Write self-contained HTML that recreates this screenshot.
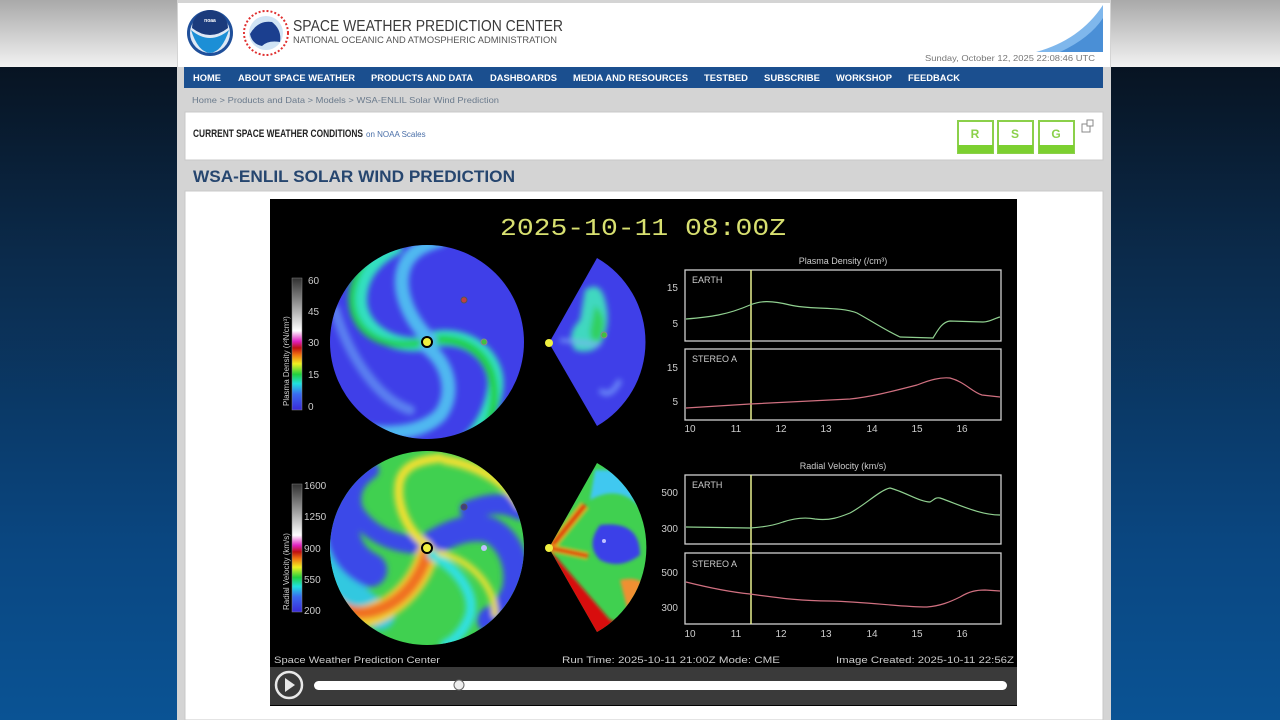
<!DOCTYPE html>
<html><head><meta charset="utf-8"><style>
html,body{margin:0;padding:0;width:1280px;height:720px;overflow:hidden;background:#000}
svg{display:block}
text{font-family:"Liberation Sans",sans-serif}
</style></head><body>
<svg width="1280" height="720" viewBox="0 0 1280 720" xmlns="http://www.w3.org/2000/svg">
<defs>
<linearGradient id="bg" x1="0" y1="0" x2="0" y2="1">
<stop offset="0" stop-color="#060c14"/><stop offset="0.35" stop-color="#0b2a4a"/><stop offset="0.75" stop-color="#0a4680"/><stop offset="1" stop-color="#0a5394"/></linearGradient>
<linearGradient id="topband" x1="0" y1="0" x2="0" y2="1"><stop offset="0" stop-color="#a9a9a9"/><stop offset="1" stop-color="#f2f2f2"/></linearGradient>
<linearGradient id="cbd" x1="0" y1="1" x2="0" y2="0">
<stop offset="0" stop-color="#3a2ad8"/><stop offset="0.12" stop-color="#3a6cf0"/><stop offset="0.2" stop-color="#20e0e0"/><stop offset="0.27" stop-color="#20d040"/><stop offset="0.35" stop-color="#f0f020"/><stop offset="0.42" stop-color="#f07010"/><stop offset="0.47" stop-color="#c01010"/><stop offset="0.52" stop-color="#e020c0"/><stop offset="0.6" stop-color="#ffffff"/><stop offset="1" stop-color="#303030"/></linearGradient>
<filter id="bl" x="-20%" y="-20%" width="140%" height="140%"><feGaussianBlur stdDeviation="3"/></filter>
<filter id="bl2"><feGaussianBlur stdDeviation="1.5"/></filter>
<clipPath id="c1"><circle cx="427" cy="342" r="97"/></clipPath>
<clipPath id="c2"><circle cx="427" cy="548" r="97"/></clipPath>
<clipPath id="w1"><path d="M549 343 L597 258 A97 97 0 0 1 597 426 Z"/></clipPath>
<clipPath id="w2"><path d="M549 548 L597 463 A97 97 0 0 1 597 632 Z"/></clipPath>
</defs>
<rect width="1280" height="720" fill="url(#bg)"/>
<rect width="1280" height="67" fill="url(#topband)"/>
<rect x="177" y="0" width="934" height="720" fill="#d4d4d4"/>
<rect x="178" y="3" width="932" height="64" fill="#fff"/>
<path d="M1036 52 Q1080 40 1103 5 L1103 52 Z" fill="#7fb7ec"/>
<path d="M1060 52 Q1090 38 1103 18 L1103 52 Z" fill="#4a8fd6"/>
<circle cx="210" cy="33" r="23" fill="#1f4f9a"/><circle cx="210" cy="33" r="20" fill="#dfe9f5"/>
<path d="M191 30 Q210 46 229 30 Q222 52 210 53 Q198 52 191 30Z" fill="#1c8fd6"/>
<path d="M192 28 A18 18 0 0 1 228 28 Q210 42 192 28Z" fill="#1b3b7c"/>
<text x="210" y="22" font-size="5" fill="#fff" text-anchor="middle" font-weight="bold">noaa</text>
<circle cx="266" cy="33" r="22" fill="#fff" stroke="#e03030" stroke-width="2" stroke-dasharray="2 2"/>
<circle cx="266" cy="33" r="17" fill="#d0e4f5"/>
<path d="M250 34 Q258 20 272 22 Q282 30 280 42 Q268 40 262 46 Q252 44 250 34Z" fill="#1b3f8f"/>
<text x="293" y="31" font-size="15.5" fill="#3a3a3a" textLength="270" lengthAdjust="spacingAndGlyphs">SPACE WEATHER PREDICTION CENTER</text>
<text x="293" y="43" font-size="9" fill="#555" textLength="264" lengthAdjust="spacingAndGlyphs">NATIONAL OCEANIC AND ATMOSPHERIC ADMINISTRATION</text>
<text x="1095" y="61" font-size="8.5" fill="#777" text-anchor="end" textLength="170" lengthAdjust="spacingAndGlyphs">Sunday, October 12, 2025 22:08:46 UTC</text>
<rect x="184" y="67" width="919" height="21" fill="#1b4f8f"/>
<g font-size="9" font-weight="bold" fill="#fff">
<text x="193" y="81" textLength="28" lengthAdjust="spacingAndGlyphs">HOME</text>
<text x="238" y="81" textLength="117" lengthAdjust="spacingAndGlyphs">ABOUT SPACE WEATHER</text>
<text x="371" y="81" textLength="102" lengthAdjust="spacingAndGlyphs">PRODUCTS AND DATA</text>
<text x="490" y="81" textLength="67" lengthAdjust="spacingAndGlyphs">DASHBOARDS</text>
<text x="573" y="81" textLength="115" lengthAdjust="spacingAndGlyphs">MEDIA AND RESOURCES</text>
<text x="704" y="81" textLength="44" lengthAdjust="spacingAndGlyphs">TESTBED</text>
<text x="764" y="81" textLength="56" lengthAdjust="spacingAndGlyphs">SUBSCRIBE</text>
<text x="836" y="81" textLength="56" lengthAdjust="spacingAndGlyphs">WORKSHOP</text>
<text x="908" y="81" textLength="52" lengthAdjust="spacingAndGlyphs">FEEDBACK</text>
</g>
<text x="192" y="103" font-size="8.5" fill="#6a7a8c" textLength="307" lengthAdjust="spacingAndGlyphs">Home &gt; Products and Data &gt; Models &gt; WSA-ENLIL Solar Wind Prediction</text>
<rect x="185" y="112" width="918" height="48" fill="#fff" stroke="#c8c8c8"/>
<text x="193" y="137" font-size="11" font-weight="bold" fill="#222" textLength="170" lengthAdjust="spacingAndGlyphs">CURRENT SPACE WEATHER CONDITIONS</text>
<text x="366" y="137" font-size="8" fill="#4a6fa8">on NOAA Scales</text>
<g font-size="12" fill="#8bd04a" text-anchor="middle" font-weight="bold">
<rect x="958" y="121" width="35" height="32" fill="#fff" stroke="#8bd04a" stroke-width="2"/><rect x="958" y="145" width="35" height="8" fill="#7cd030"/><text x="975" y="138">R</text>
<rect x="998" y="121" width="35" height="32" fill="#fff" stroke="#8bd04a" stroke-width="2"/><rect x="998" y="145" width="35" height="8" fill="#7cd030"/><text x="1015" y="138">S</text>
<rect x="1039" y="121" width="35" height="32" fill="#fff" stroke="#8bd04a" stroke-width="2"/><rect x="1039" y="145" width="35" height="8" fill="#7cd030"/><text x="1056" y="138">G</text>
</g>
<rect x="1082" y="124" width="8" height="8" fill="none" stroke="#888"/><rect x="1087" y="120" width="6" height="6" fill="#fff" stroke="#888"/>
<text x="193" y="182" font-size="17" font-weight="bold" fill="#26466f" textLength="322" lengthAdjust="spacingAndGlyphs">WSA-ENLIL SOLAR WIND PREDICTION</text>
<rect x="185" y="191" width="918" height="529" fill="#fff" stroke="#c8c8c8"/>
<rect x="270" y="199" width="747" height="507" fill="#000"/>
<text x="643" y="235" font-size="24" fill="#d8e070" text-anchor="middle" style="font-family:'Liberation Mono',monospace" textLength="286" lengthAdjust="spacingAndGlyphs">2025-10-11 08:00Z</text>

<g clip-path="url(#c1)">
<rect x="320" y="240" width="220" height="210" fill="#3f3fe8"/>
<g filter="url(#bl)" fill="none" stroke-linecap="round">
<path d="M427 343 C395 350 360 330 360 300 C360 280 370 262 395 248" stroke="#30e0c0" stroke-width="14"/>
<path d="M420 343 C380 350 350 330 352 295 C354 275 365 255 380 245" stroke="#20d050" stroke-width="7"/>
<path d="M430 340 C470 330 500 360 495 390 C490 420 475 440 450 455" stroke="#30e0c0" stroke-width="16"/>
<path d="M432 340 C478 335 505 370 490 420 C482 440 470 450 455 455" stroke="#20d040" stroke-width="8"/>
<path d="M430 340 C410 320 395 290 405 265 C412 250 425 245 440 240" stroke="#50b8f0" stroke-width="14"/>
<path d="M427 347 C450 365 455 395 440 415 C425 430 400 435 370 432" stroke="#50b8f0" stroke-width="14"/>
<path d="M335 310 C350 360 380 400 410 410" stroke="#5a80f0" stroke-width="10"/>
</g></g>
<circle cx="427" cy="342" r="5" fill="#f0f040" stroke="#000" stroke-width="2"/>
<circle cx="464" cy="300" r="3" fill="#c04040" stroke="#555"/>
<circle cx="484" cy="342" r="3" fill="#40c040" stroke="#888"/>
<g clip-path="url(#w1)">
<rect x="545" y="255" width="105" height="175" fill="#3f3fe8"/>
<g filter="url(#bl)">
<path d="M585 290 Q600 280 605 300 Q612 325 600 345 Q590 355 575 350 Q565 335 580 320 Z" fill="#40d8c0"/>
<path d="M595 305 Q610 320 600 340 Q590 345 590 330Z" fill="#30d060"/>
<path d="M560 340 L600 345" stroke="#7aa8f8" stroke-width="3"/>
<path d="M600 390 Q610 400 620 380" stroke="#6c8cf8" stroke-width="5" fill="none"/>
</g></g>
<circle cx="549" cy="343" r="4" fill="#f0f040"/>
<circle cx="604" cy="335" r="3" fill="#40c040" stroke="#888"/>

<g clip-path="url(#c2)">
<rect x="320" y="445" width="220" height="210" fill="#40d050"/>
<g filter="url(#bl)" fill="none" stroke-linecap="round">
<path d="M330 500 C325 560 345 600 380 615" stroke="#30c8e0" stroke-width="30"/>
<path d="M340 505 C340 545 350 560 370 570" stroke="#3a48e8" stroke-width="34"/>
<path d="M423 545 C395 545 370 535 355 512 C348 495 355 480 370 470" stroke="#3a48e8" stroke-width="18"/>
<path d="M430 545 C450 532 470 525 490 530 C510 540 520 565 515 590 C510 605 500 615 490 620" stroke="#3a48e8" stroke-width="26"/>
<path d="M470 510 C485 505 500 500 520 510" stroke="#3a48e8" stroke-width="20"/>
<path d="M427 555 C420 580 400 605 370 615 C355 620 340 615 330 605" stroke="#f0d030" stroke-width="22"/>
<path d="M427 555 C418 582 400 605 370 612 C355 615 345 610 335 602" stroke="#f07020" stroke-width="12"/>
<path d="M427 545 C405 530 395 500 400 480 C405 465 420 460 440 458" stroke="#f0e030" stroke-width="9"/>
<path d="M445 460 C475 465 505 480 520 505" stroke="#f0e030" stroke-width="9"/>
<path d="M432 555 C460 570 475 595 470 615 C465 630 455 640 445 645" stroke="#30e0e0" stroke-width="10"/>
<path d="M440 553 C470 560 495 585 495 615" stroke="#f0e030" stroke-width="6"/>
</g></g>
<circle cx="427" cy="548" r="5" fill="#f0f040" stroke="#000" stroke-width="2"/>
<circle cx="464" cy="507" r="3" fill="#404080" stroke="#555"/>
<circle cx="484" cy="548" r="3" fill="#c0c0ff"/>
<g clip-path="url(#w2)">
<rect x="545" y="460" width="105" height="175" fill="#40d050"/>
<g filter="url(#bl2)">
<path d="M590 500 Q625 480 650 520 L650 470 L595 470Z" fill="#40c8f0"/>
<path d="M600 525 Q640 520 640 555 Q620 570 600 560 Q585 545 600 525Z" fill="#3a40e8"/>
<path d="M620 580 Q640 575 650 590 L650 630 L630 620Z" fill="#f09030"/>
<path d="M550 550 L610 620 L650 630 L650 660 L560 660Z" fill="#d81010"/>
<path d="M550 548 L585 505" stroke="#f0c020" stroke-width="10" opacity="0.8"/>
<path d="M550 548 L585 505" stroke="#e04010" stroke-width="5"/>
<path d="M550 548 L588 556" stroke="#f0c020" stroke-width="8" opacity="0.8"/>
<path d="M550 548 L588 556" stroke="#e04010" stroke-width="4"/>
</g></g>
<circle cx="549" cy="548" r="4" fill="#f0f040"/>
<circle cx="604" cy="541" r="2" fill="#c0c0ff"/>

<rect x="292" y="278" width="10" height="132" fill="url(#cbd)" stroke="#888" stroke-width="0.5"/>
<rect x="292" y="484" width="10" height="128" fill="url(#cbd)" stroke="#888" stroke-width="0.5"/>
<g font-size="10" fill="#ccc">
<text x="308" y="284">60</text><text x="308" y="315">45</text><text x="308" y="346">30</text><text x="308" y="378">15</text><text x="308" y="410">0</text>
<text x="304" y="489">1600</text><text x="304" y="520">1250</text><text x="304" y="552">900</text><text x="304" y="583">550</text><text x="304" y="614">200</text>
</g>
<text transform="translate(289 406) rotate(-90)" font-size="8" fill="#ccc">Plasma Density (r²N/cm³)</text>
<text transform="translate(289 610) rotate(-90)" font-size="8" fill="#ccc">Radial Velocity (km/s)</text>

<g fill="none" stroke="#cfcfcf" stroke-width="1.3">
<rect x="685" y="270" width="316" height="71"/><rect x="685" y="349" width="316" height="71"/>
<rect x="685" y="475" width="316" height="69"/><rect x="685" y="553" width="316" height="71"/>
</g>
<g stroke="#e8f090" stroke-width="1.5">
<line x1="751" y1="270" x2="751" y2="420"/><line x1="751" y1="475" x2="751" y2="624"/>
</g>
<g font-size="9" fill="#ccc">
<text x="843" y="264" text-anchor="middle">Plasma Density (/cm³)</text>
<text x="843" y="469" text-anchor="middle">Radial Velocity (km/s)</text>
<text x="692" y="283">EARTH</text><text x="692" y="362">STEREO A</text>
<text x="692" y="488">EARTH</text><text x="692" y="567">STEREO A</text>
</g>
<g font-size="10" fill="#ccc" text-anchor="end">
<text x="678" y="291">15</text><text x="678" y="327">5</text>
<text x="678" y="371">15</text><text x="678" y="405">5</text>
<text x="678" y="496">500</text><text x="678" y="532">300</text>
<text x="678" y="576">500</text><text x="678" y="611">300</text>
</g>
<g font-size="10" fill="#ccc" text-anchor="middle">
<text x="690" y="432">10</text><text x="736" y="432">11</text><text x="781" y="432">12</text><text x="826" y="432">13</text><text x="872" y="432">14</text><text x="917" y="432">15</text><text x="962" y="432">16</text>
<text x="690" y="637">10</text><text x="736" y="637">11</text><text x="781" y="637">12</text><text x="826" y="637">13</text><text x="872" y="637">14</text><text x="917" y="637">15</text><text x="962" y="637">16</text>
</g>
<g fill="none" stroke-width="1.2">
<path d="M686 319 C710 317 727 315 750 305 C760 301 770 300 790 305 C810 310 840 306 857 313 C870 320 885 330 900 337 L933 338 C938 330 942 322 950 321 L983 322 C990 322 995 318 1000 317" stroke="#90d090"/>
<path d="M686 408 L750 404 L850 399 C870 397 890 392 917 385 C930 380 940 377 950 378 C965 382 972 392 982 395 L1000 397" stroke="#d07080"/>
<path d="M686 527 L750 528 C765 527 775 525 783 522 C795 518 805 517 815 519 C830 521 840 517 850 513 C865 505 880 490 890 488 C905 492 920 502 930 502 C934 500 935 497 940 498 C960 505 980 515 1000 515" stroke="#90d090"/>
<path d="M686 582 C710 588 730 592 750 594 C780 598 800 601 830 601 C870 602 900 607 927 607 C940 606 950 602 960 597 C970 591 977 590 985 590 L1000 591" stroke="#d07080"/>
</g>
<g font-size="9.5" fill="#ccc">
<text x="274" y="663" textLength="166" lengthAdjust="spacingAndGlyphs">Space Weather Prediction Center</text>
<text x="562" y="663" textLength="218" lengthAdjust="spacingAndGlyphs">Run Time: 2025-10-11 21:00Z  Mode: CME</text>
<text x="836" y="663" textLength="178" lengthAdjust="spacingAndGlyphs">Image Created: 2025-10-11 22:56Z</text>
</g>
<rect x="270" y="667" width="747" height="38" fill="#3a3a3a"/>
<circle cx="289" cy="685" r="13" fill="none" stroke="#e8e8e8" stroke-width="2.5"/>
<path d="M285 678 L295 685 L285 692 Z" fill="#e8e8e8"/>
<rect x="314" y="681" width="693" height="9" rx="4.5" fill="#fff"/>
<circle cx="459" cy="685" r="5" fill="#eee" stroke="#666"/>
</svg>
</body></html>
